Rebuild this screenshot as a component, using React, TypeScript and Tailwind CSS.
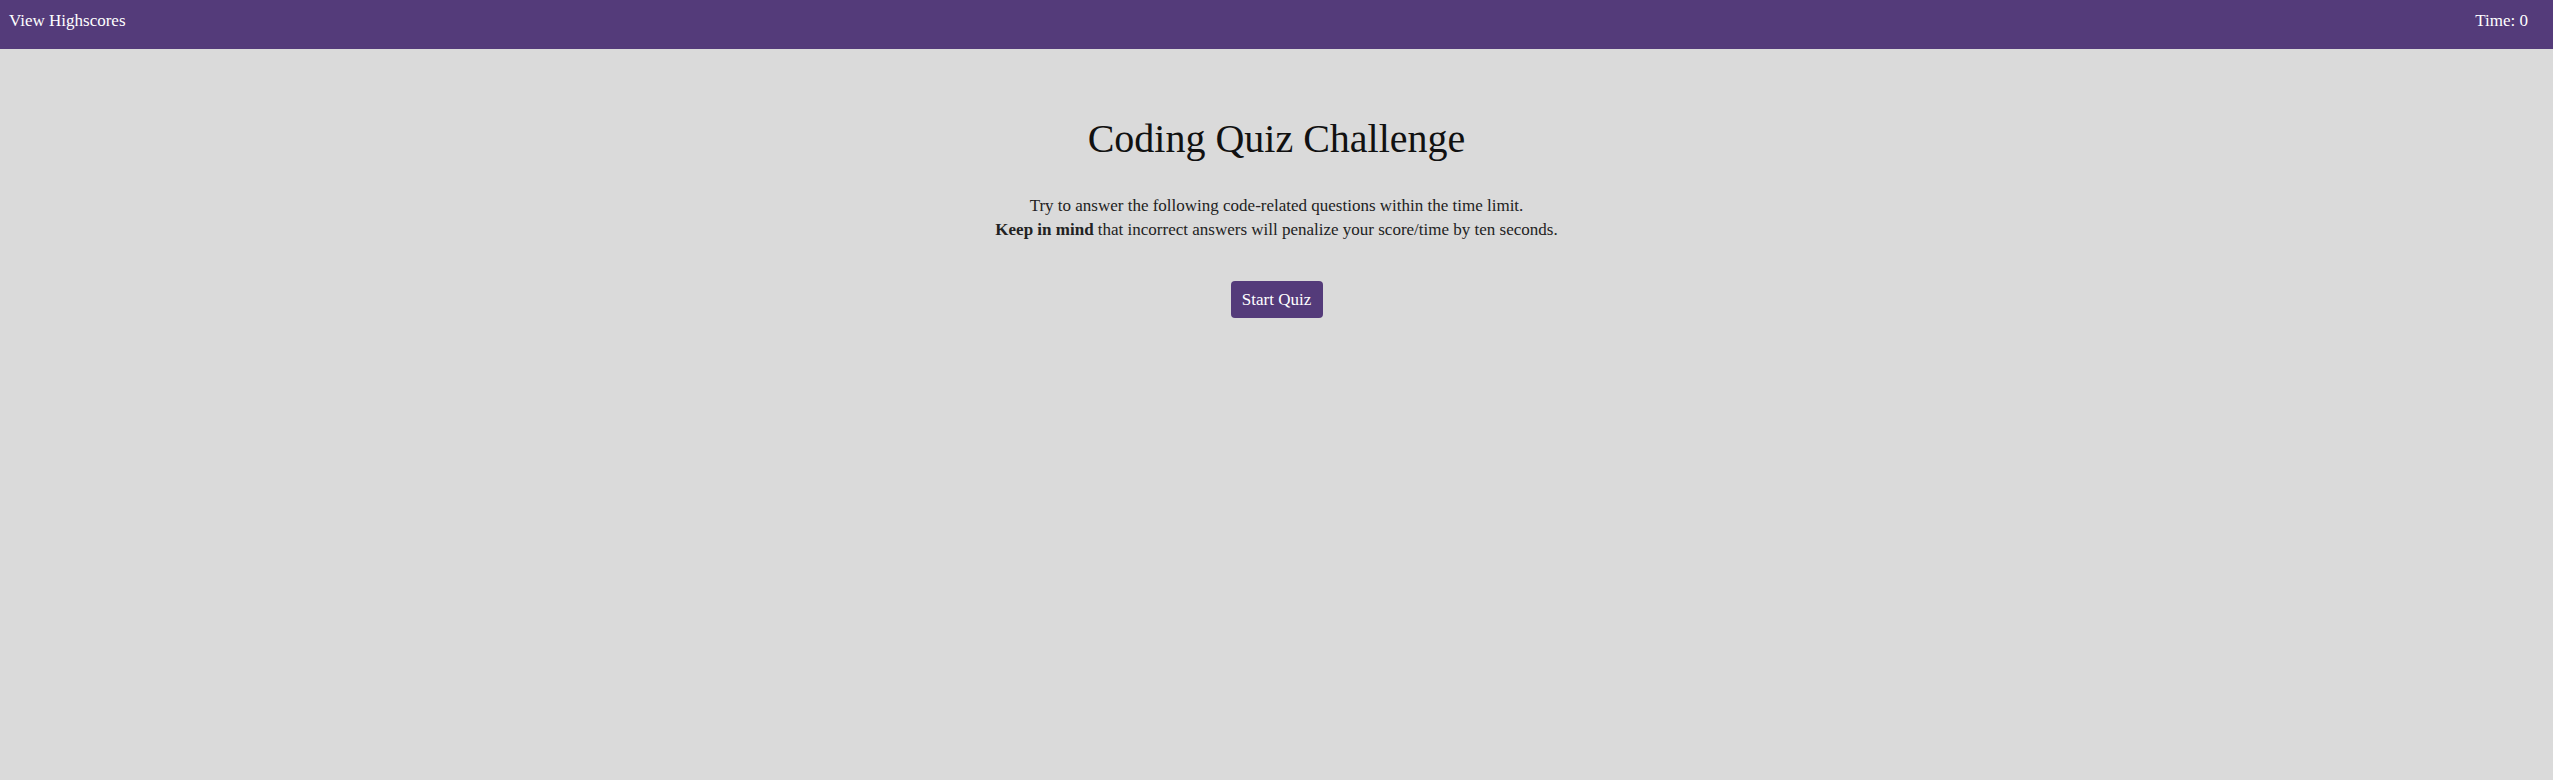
export default function App() {
  return (
    <div className="min-h-[780px] bg-[#dadada] text-[#111] [font-family:'Liberation_Serif',serif]">
      <header className="flex h-[49px] items-center justify-between bg-[#543b7a] pb-[7px] pl-[9px] pr-[25px] text-[17px] text-white">
        <a href="#">View Highscores</a>
        <span>Time: 0</span>
      </header>

      <main className="flex flex-col items-center text-center">
        <h1 className="mt-[64px] text-[40px] leading-[52px]">Coding Quiz Challenge</h1>
        <p className="mt-[29px] text-[17px] leading-[24px] text-[#222]">
          Try to answer the following code-related questions within the time limit.
          <br />
          <strong>Keep in mind</strong> that incorrect answers will penalize your score/time by ten seconds.
        </p>
        <button className="mt-[39px] h-[37px] w-[92px] rounded-[4px] bg-[#543b7a] text-[17px] text-white">
          Start Quiz
        </button>
      </main>
    </div>
  )
}
